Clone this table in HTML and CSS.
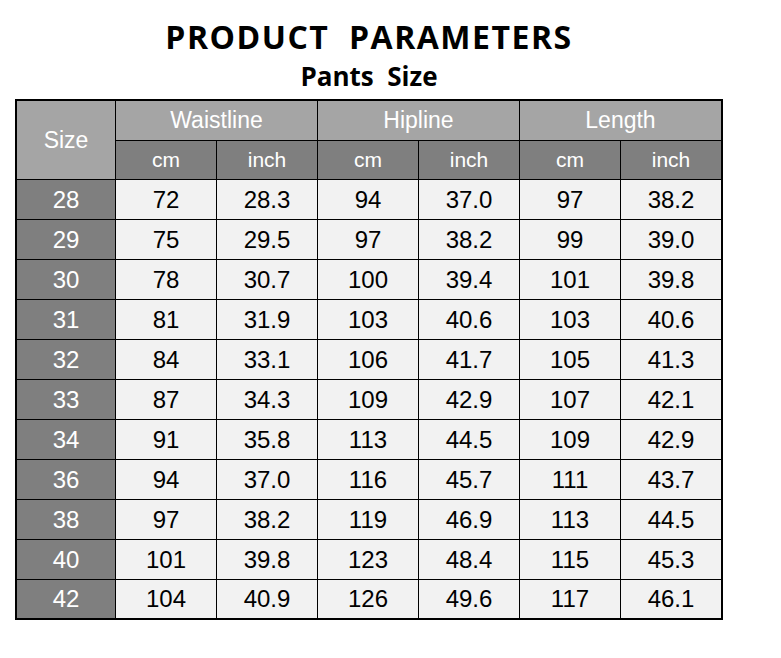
FILE: index.html
```html
<!DOCTYPE html>
<html>
<head>
<meta charset="utf-8">
<link rel="stylesheet" href="styles.css">
</head>
<body>
<div class="sheet">
  <h1 class="title">PRODUCT&nbsp; PARAMETERS</h1>
  <h2 class="subtitle">Pants&nbsp; Size</h2>
  <div class="grid">
    <div class="cell head size-head">Size</div>
    <div class="cell head group">Waistline</div>
    <div class="cell head group">Hipline</div>
    <div class="cell head group">Length</div>
    <div class="cell unit">cm</div><div class="cell unit">inch</div>
    <div class="cell unit">cm</div><div class="cell unit">inch</div>
    <div class="cell unit">cm</div><div class="cell unit">inch</div>

    <div class="cell size">28</div><div class="cell">72</div><div class="cell">28.3</div><div class="cell">94</div><div class="cell">37.0</div><div class="cell">97</div><div class="cell">38.2</div>
    <div class="cell size">29</div><div class="cell">75</div><div class="cell">29.5</div><div class="cell">97</div><div class="cell">38.2</div><div class="cell">99</div><div class="cell">39.0</div>
    <div class="cell size">30</div><div class="cell">78</div><div class="cell">30.7</div><div class="cell">100</div><div class="cell">39.4</div><div class="cell">101</div><div class="cell">39.8</div>
    <div class="cell size">31</div><div class="cell">81</div><div class="cell">31.9</div><div class="cell">103</div><div class="cell">40.6</div><div class="cell">103</div><div class="cell">40.6</div>
    <div class="cell size">32</div><div class="cell">84</div><div class="cell">33.1</div><div class="cell">106</div><div class="cell">41.7</div><div class="cell">105</div><div class="cell">41.3</div>
    <div class="cell size">33</div><div class="cell">87</div><div class="cell">34.3</div><div class="cell">109</div><div class="cell">42.9</div><div class="cell">107</div><div class="cell">42.1</div>
    <div class="cell size">34</div><div class="cell">91</div><div class="cell">35.8</div><div class="cell">113</div><div class="cell">44.5</div><div class="cell">109</div><div class="cell">42.9</div>
    <div class="cell size">36</div><div class="cell">94</div><div class="cell">37.0</div><div class="cell">116</div><div class="cell">45.7</div><div class="cell">111</div><div class="cell">43.7</div>
    <div class="cell size">38</div><div class="cell">97</div><div class="cell">38.2</div><div class="cell">119</div><div class="cell">46.9</div><div class="cell">113</div><div class="cell">44.5</div>
    <div class="cell size">40</div><div class="cell">101</div><div class="cell">39.8</div><div class="cell">123</div><div class="cell">48.4</div><div class="cell">115</div><div class="cell">45.3</div>
    <div class="cell size">42</div><div class="cell">104</div><div class="cell">40.9</div><div class="cell">126</div><div class="cell">49.6</div><div class="cell">117</div><div class="cell">46.1</div>
  </div>
</div>
</body>
</html>
```
FILE: styles.css
```css
html, body {
  margin: 0;
  padding: 0;
  background: #ffffff;
}

.sheet {
  width: 708px;
  margin-left: 15px;
  padding-top: 19px;
}

.title {
  margin: 0;
  font-family: "Open Sans", "Noto Sans", sans-serif;
  font-weight: 700;
  font-size: 32px;
  line-height: 36px;
  letter-spacing: 1.5px;
  text-align: center;
  color: #000;
}

.subtitle {
  margin: 7px 0 9px;
  font-family: "Open Sans", "Noto Sans", sans-serif;
  font-weight: 700;
  font-size: 26px;
  line-height: 28px;
  text-align: center;
  color: #000;
}

.grid {
  display: grid;
  grid-template-columns: 98px repeat(6, 100px);
  grid-template-rows: 39px 38px repeat(10, 39px) 38px;
  gap: 1px;
  background: #000;
  border: 2px solid #000;
  font-family: "Liberation Sans", Arial, sans-serif;
}

.cell {
  display: flex;
  align-items: center;
  justify-content: center;
  background: #f2f2f2;
  color: #000;
  font-size: 24px;
}

.head {
  background: #a5a5a5;
  color: #fff;
  font-size: 23px;
}

.size-head {
  grid-row: span 2;
}

.group {
  grid-column: span 2;
}

.unit {
  background: #7f7f7f;
  color: #fff;
  font-size: 21px;
}

.size {
  background: #7f7f7f;
  color: #fff;
}
```
